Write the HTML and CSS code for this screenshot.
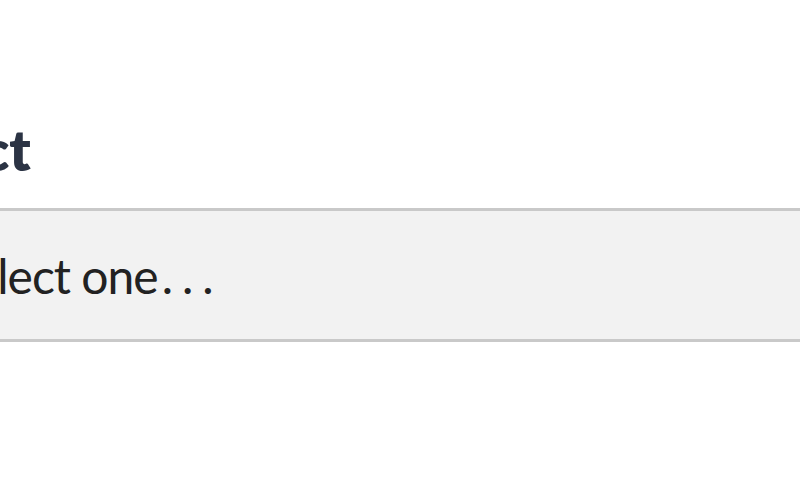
FILE: index.html
```html
<!DOCTYPE html>
<html>
<head>
<meta charset="utf-8">
<link rel="stylesheet" href="styles.css">
</head>
<body>
<div class="page">
  <div class="field">
    <label class="label">Select</label>
    <div class="select"><span class="select-text">Select one<span class="dots">...</span></span></div>
  </div>
</div>
</body>
</html>
```
FILE: styles.css
```css
html, body {
  margin: 0;
  padding: 0;
  background: #ffffff;
}
body {
  width: 800px;
  height: 500px;
  overflow: hidden;
  font-family: "Lato", "Liberation Sans", sans-serif;
}
.page {
  padding-top: 118px;
  margin-left: -140px;
}
.field {
  display: flex;
  flex-direction: column;
}
.label {
  font-size: 56px;
  font-weight: 800;
  color: #2b3344;
  line-height: 64px;
  padding-left: 16px;
  height: 90px;
}
.select {
  width: 1200px;
  height: 128px;
  background: #f2f2f2;
  border-top: 3px solid #c9c9c9;
  border-bottom: 3px solid #c9c9c9;
  display: flex;
  align-items: center;
  padding-left: 88px;
  box-sizing: content-box;
}
.select-text {
  font-size: 48px;
  letter-spacing: -1px;
  color: #222222;
}
.dots {
  letter-spacing: 9px;
  margin-left: 4px;
}
```
